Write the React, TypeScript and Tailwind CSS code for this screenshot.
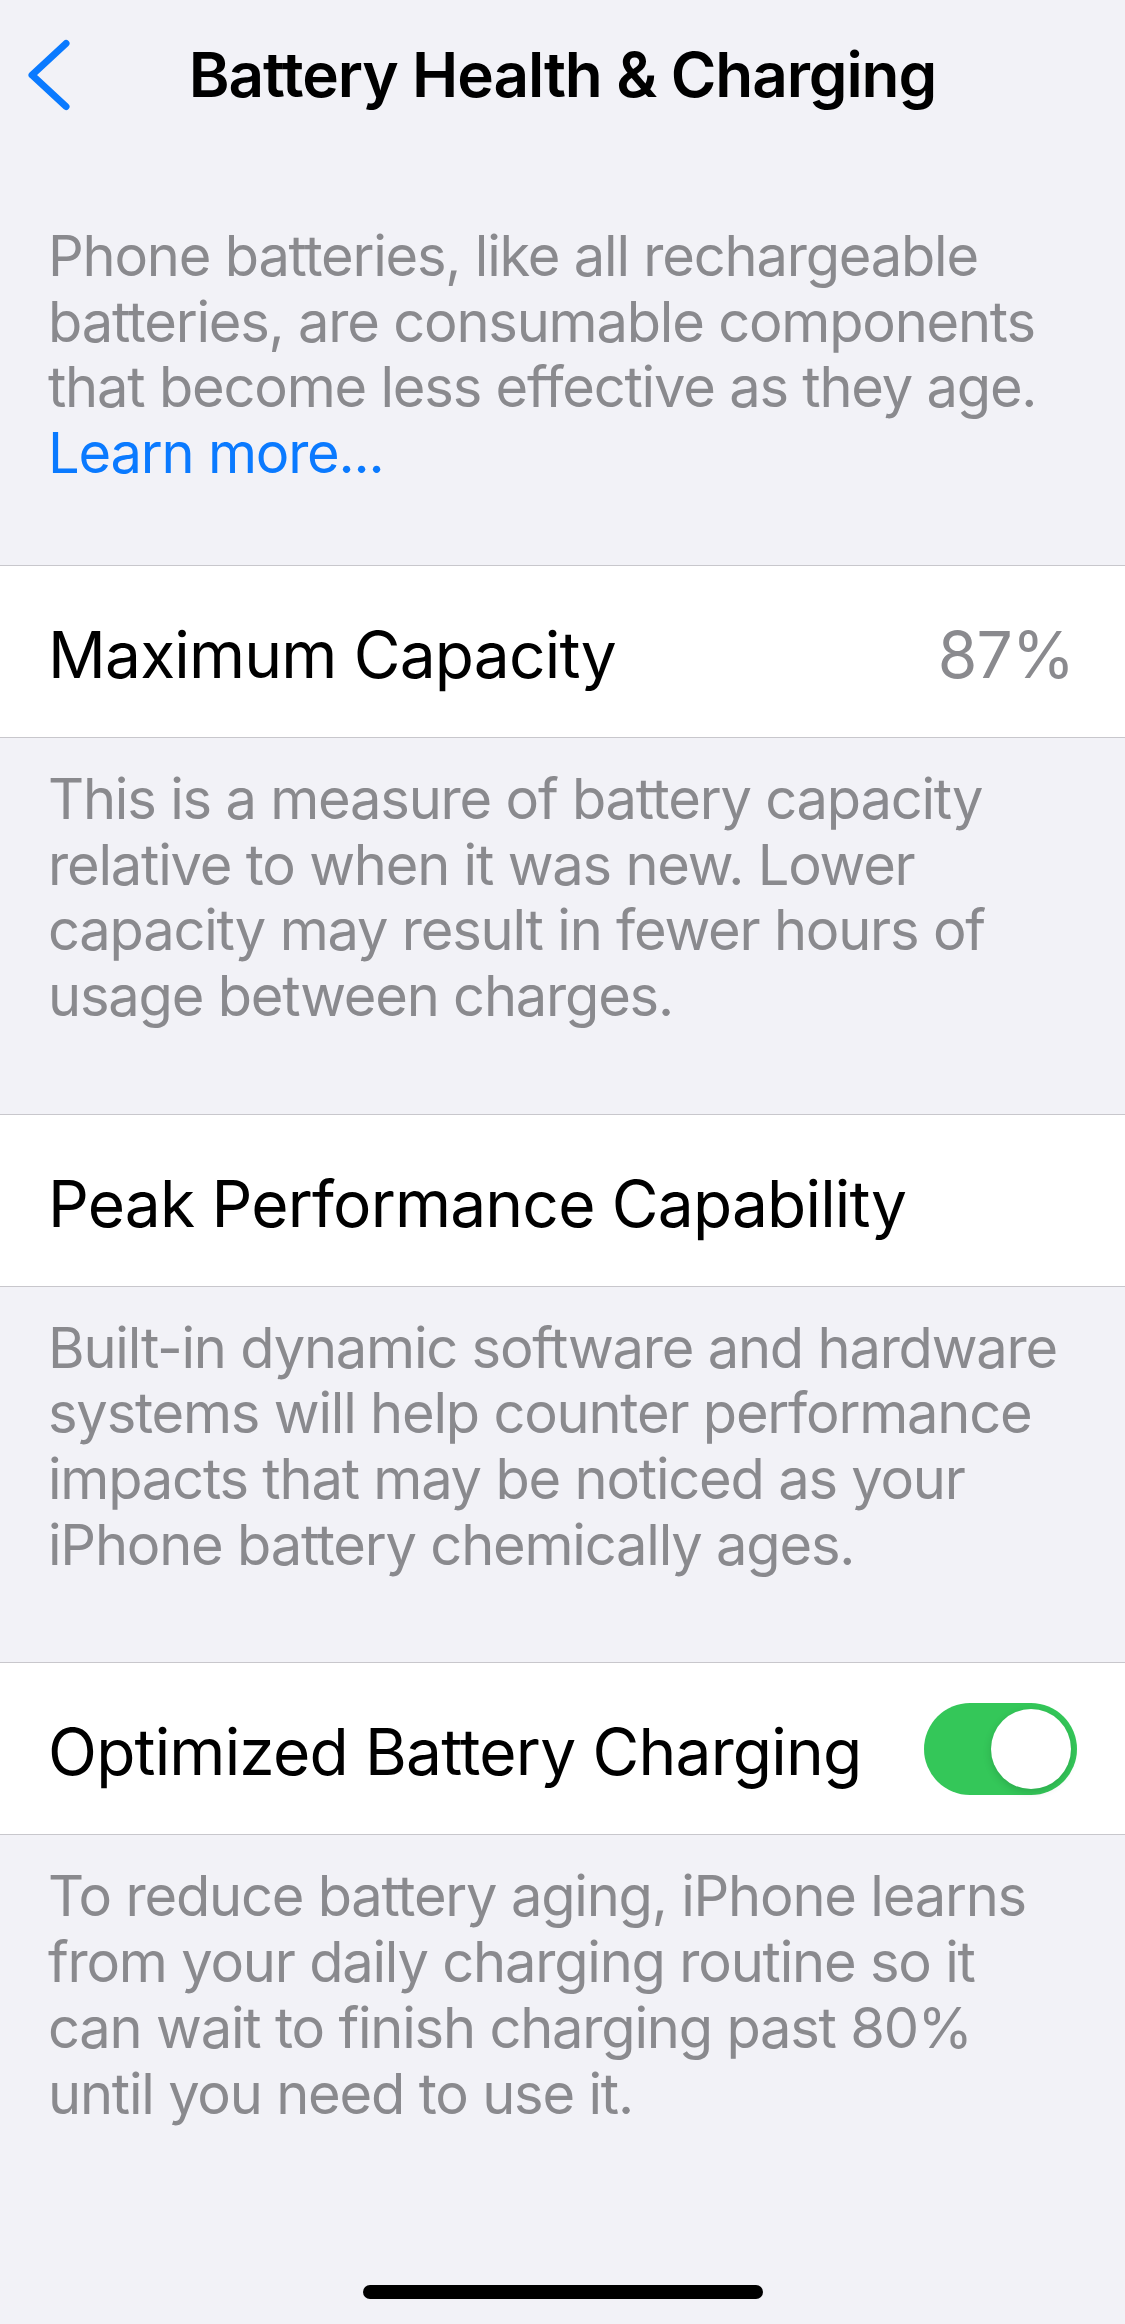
import React, { useState } from 'react';

const font = { fontFamily: 'Inter, "Noto Sans", sans-serif' };

const BackChevron = () => (
  <svg width="50" height="78" viewBox="0 0 50 78" fill="none" className="ml-[22px]">
    <path
      d="M44 7.5 L10 39 L44 70.5"
      stroke="#0A7AFF"
      strokeWidth="7"
      strokeLinecap="round"
      strokeLinejoin="round"
    />
  </svg>
);

const Footer = ({ lines, link, pad = 'pt-[29px] pb-[84px]' }: { lines: string[]; link?: string; pad?: string }) => (
  <div className={`px-[48px] ${pad} text-[56px] leading-[65.7px] text-[#8A8A8E] tracking-[-1.2px]`}>
    {lines.map((l) => (
      <div key={l} className="whitespace-nowrap">{l}</div>
    ))}
    {link && <div className="whitespace-nowrap text-[#0A7AFF]">{link}</div>}
  </div>
);

const Row = ({ label, children }: { label: string; children?: React.ReactNode }) => (
  <div className="flex items-center justify-between h-[173px] bg-white border-y border-[#C8C7CC] pl-[48px] pr-[48px]">
    <span className="pt-[7px] text-[64px] text-black tracking-[-0.8px] whitespace-nowrap">{label}</span>
    {children}
  </div>
);

const Toggle = ({ on, onChange }: { on: boolean; onChange: () => void }) => (
  <button
    onClick={onChange}
    className={`flex items-center w-[153px] h-[92px] rounded-full p-[6px] transition-colors ${
      on ? 'bg-[#34C759] justify-end' : 'bg-[#E9E9EA] justify-start'
    }`}
  >
    <span className="block w-[80px] h-[80px] rounded-full bg-white shadow-[0_3px_8px_rgba(0,0,0,0.15)]" />
  </button>
);

export default function App() {
  const [optimized, setOptimized] = useState(true);

  return (
    <div className="flex flex-col h-[2324px] bg-[#F2F2F7] overflow-hidden" style={font}>
      {/* nav bar */}
      <div className="grid grid-cols-[1fr_auto_1fr] items-center pt-[36px]">
        <div className="flex items-center">
          <BackChevron />
        </div>
        <h1 className="text-[62px] leading-[76px] font-semibold text-black tracking-[-1.1px] whitespace-nowrap">
          Battery Health &amp; Charging
        </h1>
        <div />
      </div>

      <Footer
        pad="pt-[110px] pb-[78px]"
        lines={[
          'Phone batteries, like all rechargeable',
          'batteries, are consumable components',
          'that become less effective as they age.',
        ]}
        link="Learn more..."
      />

      <Row label="Maximum Capacity">
        <span className="pt-[7px] pr-[3px] text-[64px] text-[#8A8A8E] tracking-[-0.8px]">87%</span>
      </Row>
      <Footer
        lines={[
          'This is a measure of battery capacity',
          'relative to when it was new. Lower',
          'capacity may result in fewer hours of',
          'usage between charges.',
        ]}
      />

      <Row label="Peak Performance Capability" />
      <Footer
        lines={[
          'Built-in dynamic software and hardware',
          'systems will help counter performance',
          'impacts that may be noticed as your',
          'iPhone battery chemically ages.',
        ]}
      />

      <Row label="Optimized Battery Charging">
        <Toggle on={optimized} onChange={() => setOptimized((v) => !v)} />
      </Row>
      <Footer
        pad="pt-[29px]"
        lines={[
          'To reduce battery aging, iPhone learns',
          'from your daily charging routine so it',
          'can wait to finish charging past 80%',
          'until you need to use it.',
        ]}
      />

      {/* home indicator */}
      <div className="mt-auto mb-[25px] self-center w-[400px] h-[14px] rounded-full bg-black" />
    </div>
  );
}
